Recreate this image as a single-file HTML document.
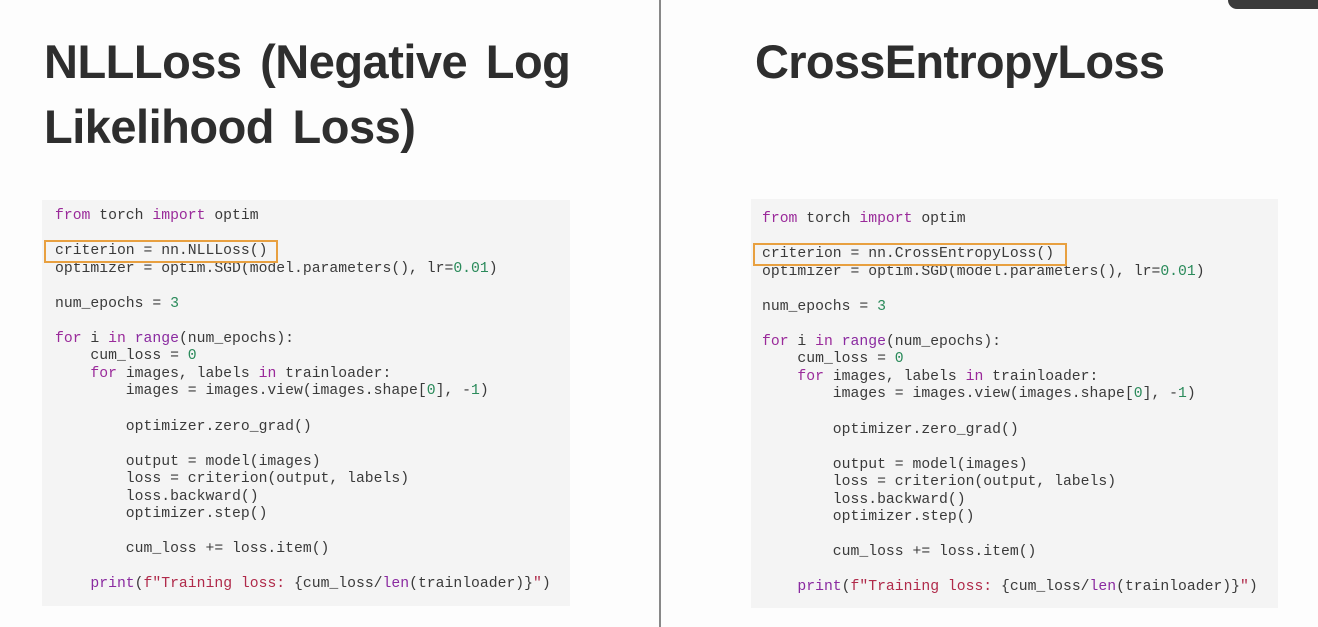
<!DOCTYPE html>
<html><head><style>
body{margin:0;width:1318px;height:627px;background:#fdfdfd;position:relative;overflow:hidden;font-family:"Liberation Sans",sans-serif}
.t{position:absolute;color:#2e2e2e;font-weight:bold;font-size:47px;line-height:65px;letter-spacing:-0.5px}
.box{position:absolute;background:#f4f4f4}
pre{position:absolute;margin:0;font-family:"Liberation Mono",monospace;font-size:14.75px;line-height:17.55px;color:#3a3a3a}
.k{color:#9a2a9a}.n{color:#2a8a5a}.s{color:#b02a4a}.b{color:#8a2aa0}
.hl{position:absolute;border:2px solid #e8a040;box-sizing:border-box}
</style></head><body>
<div class="t" style="left:44px;top:29px;word-spacing:6px">NLLLoss (Negative Log<br>Likelihood Loss)</div>
<div class="t" style="left:755px;top:29px;letter-spacing:-0.7px">CrossEntropyLoss</div>
<div style="position:absolute;left:659px;top:0;width:2px;height:627px;background:#888"></div>
<div style="position:absolute;left:1228px;top:0;width:100px;height:9px;background:#3a3a3a;border-radius:0 0 0 14px"></div>
<div class="box" style="left:42px;top:200px;width:528px;height:406px"></div>
<div class="box" style="left:751px;top:199px;width:527px;height:409px"></div>
<pre style="left:55px;top:208px"><span class="k">from</span> torch <span class="k">import</span> optim

criterion = nn.NLLLoss()
optimizer = optim.SGD(model.parameters(), lr=<span class="n">0.01</span>)

num_epochs = <span class="n">3</span>

<span class="k">for</span> i <span class="k">in</span> <span class="b">range</span>(num_epochs):
    cum_loss = <span class="n">0</span>
    <span class="k">for</span> images, labels <span class="k">in</span> trainloader:
        images = images.view(images.shape[<span class="n">0</span>], -<span class="n">1</span>)

        optimizer.zero_grad()

        output = model(images)
        loss = criterion(output, labels)
        loss.backward()
        optimizer.step()

        cum_loss += loss.item()

    <span class="b">print</span>(<span class="s">f"Training loss: </span>{cum_loss/<span class="b">len</span>(trainloader)}<span class="s">"</span>)</pre>
<pre style="left:762px;top:211px"><span class="k">from</span> torch <span class="k">import</span> optim

criterion = nn.CrossEntropyLoss()
optimizer = optim.SGD(model.parameters(), lr=<span class="n">0.01</span>)

num_epochs = <span class="n">3</span>

<span class="k">for</span> i <span class="k">in</span> <span class="b">range</span>(num_epochs):
    cum_loss = <span class="n">0</span>
    <span class="k">for</span> images, labels <span class="k">in</span> trainloader:
        images = images.view(images.shape[<span class="n">0</span>], -<span class="n">1</span>)

        optimizer.zero_grad()

        output = model(images)
        loss = criterion(output, labels)
        loss.backward()
        optimizer.step()

        cum_loss += loss.item()

    <span class="b">print</span>(<span class="s">f"Training loss: </span>{cum_loss/<span class="b">len</span>(trainloader)}<span class="s">"</span>)</pre>
<div class="hl" style="left:44px;top:240px;width:234px;height:23px"></div>
<div class="hl" style="left:753px;top:243px;width:314px;height:23px"></div>
</body></html>
